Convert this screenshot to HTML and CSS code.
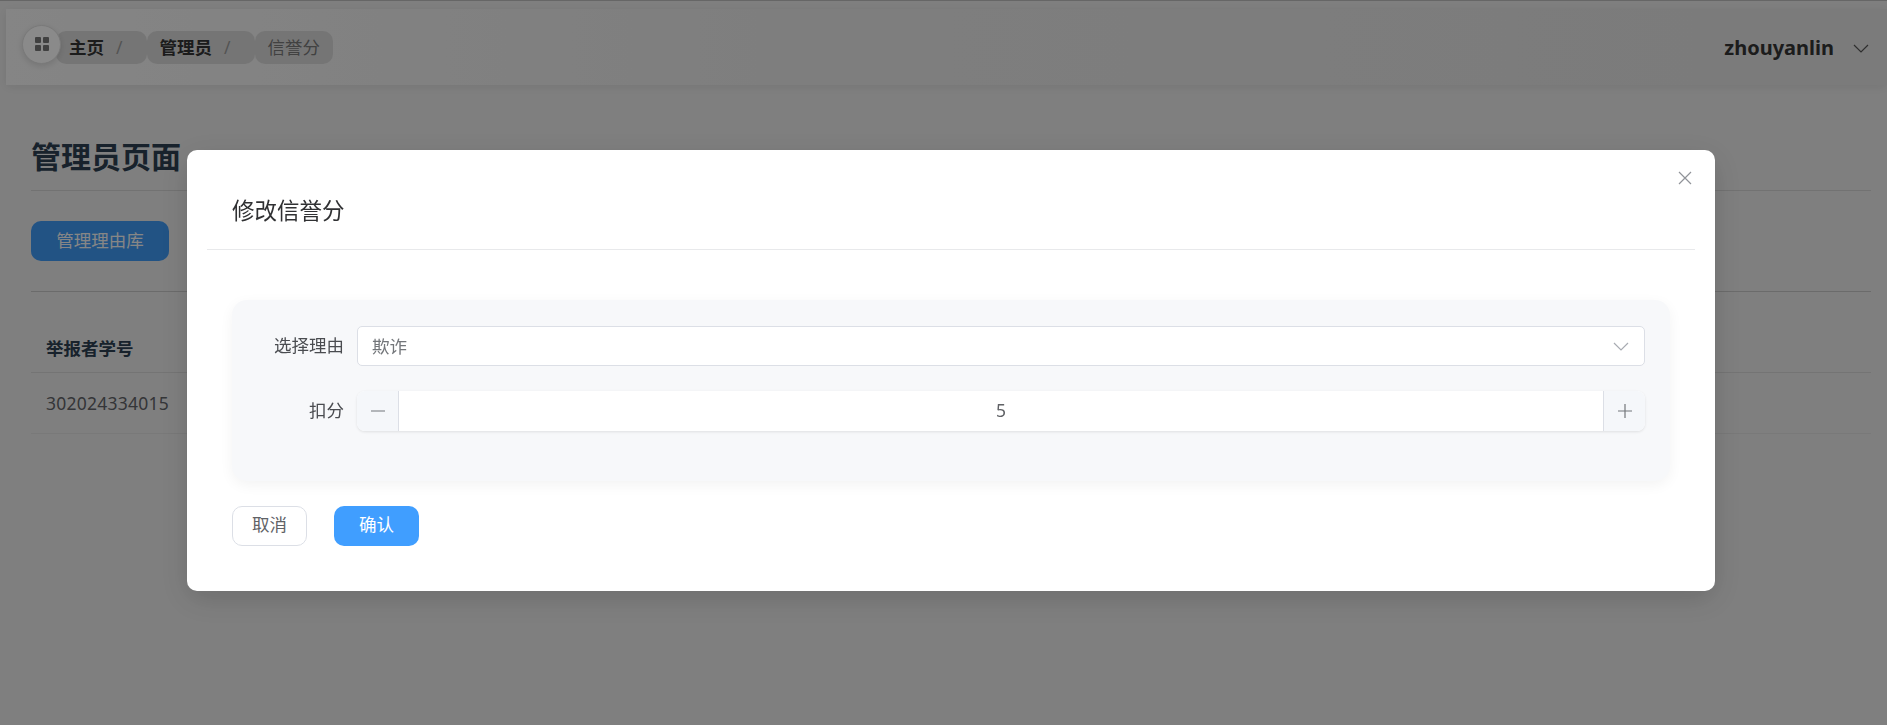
FILE: index.html
```html
<!DOCTYPE html>
<html>
<head>
    <title>管理员页面</title>
    <link rel="stylesheet" href="styles.css">
</head>
<body>
    <div class="topbar">
        <div class="crumbs">
            <div class="menu-btn">
                <svg width="14" height="14" viewBox="0 0 14 14"><rect x="0" y="0" width="6" height="6" rx="1"/><rect x="8" y="0" width="6" height="6" rx="1"/><rect x="0" y="8" width="6" height="6" rx="1"/><rect x="8" y="8" width="6" height="6" rx="1"/></svg>
            </div>
            <div class="crumb first"><b>主页</b><i>/</i></div>
            <div class="crumb"><b>管理员</b><i>/</i></div>
            <div class="crumb last">信誉分</div>
        </div>
        <div class="user">
            <span>zhouyanlin</span>
            <svg class="chev" width="16" height="9" viewBox="0 0 16 9"><path d="M1 1l7 7 7-7"/></svg>
        </div>
    </div>

    <div class="content">
        <h1>管理员页面</h1>
        <div class="toolbar">
            <button class="btn-page">管理理由库</button>
        </div>
        <div class="table">
            <div class="table-head">举报者学号</div>
            <div class="table-row">302024334015</div>
        </div>
    </div>

    <div class="overlay">
        <div class="dialog">
            <button class="close">
                <svg width="14" height="14" viewBox="0 0 14 14"><path d="M1 1l12 12M13 1L1 13"/></svg>
            </button>
            <div class="dialog-title">修改信誉分</div>
            <div class="dialog-body">
                <div class="form-panel">
                    <div class="form-row">
                        <label>选择理由</label>
                        <div class="select">
                            <span>欺诈</span>
                            <svg width="16" height="9" viewBox="0 0 16 9"><path d="M1 1l7 7 7-7"/></svg>
                        </div>
                    </div>
                    <div class="form-row">
                        <label>扣分</label>
                        <div class="number">
                            <div class="step minus">
                                <svg width="14" height="14" viewBox="0 0 14 14"><path d="M0 7h14"/></svg>
                            </div>
                            <div class="value">5</div>
                            <div class="step plus">
                                <svg width="14" height="14" viewBox="0 0 14 14"><path d="M0 7h14M7 0v14"/></svg>
                            </div>
                        </div>
                    </div>
                </div>
                <div class="actions">
                    <button class="btn btn-cancel">取消</button>
                    <button class="btn btn-ok">确认</button>
                </div>
            </div>
        </div>
    </div>
</body>
</html>
```

FILE: styles.css
```css
* { box-sizing: border-box; }
html, body { height: 100%; }
body { margin: 0; border-top: 1px solid #bbb; background: #e8e8e8; color: #303133; font-family: "Noto Sans", "Noto Sans CJK SC", sans-serif; font-size: 17.5px; overflow: hidden; }
button { font-family: inherit; font-size: inherit; cursor: pointer; }

.topbar { height: 76px; margin: 8px 0 0 6px; padding: 16px 0 0 16px; display: flex; justify-content: space-between; align-items: flex-start; background: linear-gradient(90deg, #f2f2f2, #e6e6e6 40%, #e0e0e0); box-shadow: 0 2px 10px rgba(0,0,0,0.08); }
.crumbs { display: flex; align-items: flex-start; }
.menu-btn { width: 39px; height: 39px; border-radius: 50%; background: #fcfcfc; border: 1px solid #ddd; box-shadow: 0 2px 6px rgba(0,0,0,0.12); display: flex; align-items: center; justify-content: center; padding-bottom: 2px; position: relative; z-index: 1; }
.menu-btn svg { fill: #777; }
.crumb { height: 33px; margin-top: 6px; padding: 0 13px; display: flex; align-items: center; background: #d6d6d6; border-radius: 10px; color: #777; line-height: 33px; }
.crumb b { color: #333; font-weight: 700; }
.crumb i { margin-left: 12px; margin-right: 11px; font-style: normal; color: #999; }
.crumb.first { margin-left: -5px; }
.user { margin-right: 18px; margin-top: 8px; display: flex; align-items: center; gap: 19px; font-size: 20px; font-weight: 700; color: #333; line-height: 30px; }
.chev { fill: none; stroke: #555; stroke-width: 1.2; }

.content { padding: 0 16px 0 31px; }
h1 { margin: 51px 0 0; height: 55px; font-size: 30px; line-height: 42px; font-weight: 700; color: #2c3e50; border-bottom: 1px solid #d0d0d0; }
.toolbar { height: 101px; padding-top: 30px; border-bottom: 1px solid #c4c4c4; }
.btn-page { width: 138px; height: 40px; background: #3e97f1; color: #f4f4f4; border: none; border-radius: 10px; padding: 0 0 4px; }
.table-head { height: 81px; padding: 41px 0 0 15px; line-height: 30px; font-weight: 700; color: #2c3e50; border-bottom: 1px solid #d4d4d4; }
.table-row { height: 61px; padding-left: 15px; line-height: 60px; letter-spacing: 0.25px; color: #606266; border-bottom: 1px solid #dcdcdc; }

.overlay { position: fixed; top: 0; left: 0; right: 0; bottom: 0; z-index: 10; background: rgba(0,0,0,0.45); }
.dialog { position: relative; width: 1528px; height: 441px; margin: 150px 0 0 187px; background: #fff; border-radius: 10px; box-shadow: 0 8px 30px rgba(0,0,0,0.16); }
.close { position: absolute; top: 21px; right: 23px; width: 14px; height: 14px; padding: 0; border: none; background: none; display: flex; }
.close svg { fill: none; stroke: #909399; stroke-width: 1.2; }
.dialog-title { height: 100px; margin: 0 20px; padding: 46px 25px 0; font-size: 22.5px; line-height: 30px; color: #303133; border-bottom: 1px solid #e8e9eb; }
.dialog-body { padding: 50px 45px 0; }
.form-panel { height: 181px; padding: 26px 25px 0 0; background: #f7f8fa; border-radius: 15px; box-shadow: 0 4px 14px rgba(0,0,0,0.05); }
.form-row { display: flex; align-items: center; margin-bottom: 25px; }
.form-row label { width: 112px; padding-bottom: 2px; text-align: right; color: #4a4c50; line-height: 30px; }
.select { flex: 1; height: 40px; margin-left: 13px; padding: 0 15px 0 14px; display: flex; align-items: center; justify-content: space-between; background: #fff; border: 1px solid #dcdfe6; border-radius: 5px; color: #73767a; }
.select span { padding-bottom: 2px; }
.select svg { fill: none; stroke: #a8abb2; stroke-width: 1.2; }
.number { flex: 1; height: 40px; margin-left: 13px; display: flex; background: #fff; border-radius: 8px; box-shadow: 0 1px 3px rgba(0,0,0,0.1); overflow: hidden; }
.step { width: 42px; background: #f5f7fa; display: flex; align-items: center; justify-content: center; }
.step svg { fill: none; stroke: #73767a; stroke-width: 1.2; }
.step.minus { border-right: 1px solid #dcdfe6; }
.step.plus { border-left: 1px solid #dcdfe6; }
.value { flex: 1; text-align: center; line-height: 38px; color: #606266; }
.actions { display: flex; gap: 27px; margin-top: 25px; }
.btn { height: 40px; padding: 0 0 5px; border-radius: 10px; line-height: 34px; }
.btn-cancel { width: 75px; background: #fff; color: #606266; border: 1px solid #dcdfe6; }
.btn-ok { width: 85px; background: #409eff; color: #fff; border: none; }
```
